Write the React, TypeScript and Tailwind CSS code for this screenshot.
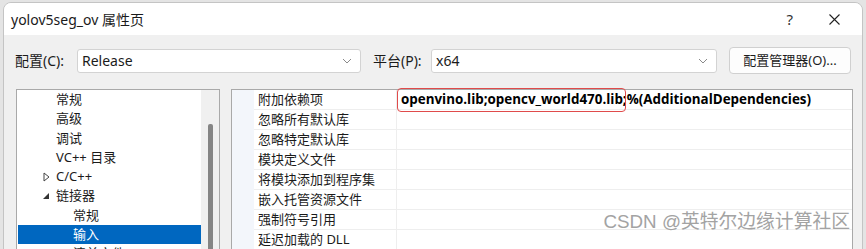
import React from 'react'

const FONT = { fontFamily: '"Noto Sans", "Noto Sans CJK SC", sans-serif' }

const TREE = [
  { label: '常规', indent: 'pl-[38px]' },
  { label: '高级', indent: 'pl-[38px]' },
  { label: '调试', indent: 'pl-[38px]' },
  { label: 'VC++ 目录', indent: 'pl-[38px]' },
  { label: 'C/C++', indent: 'pl-[38px]', arrow: 'closed' },
  { label: '链接器', indent: 'pl-[38px]', arrow: 'open' },
  { label: '常规', indent: 'pl-[55px]' },
  { label: '输入', indent: 'pl-[55px]', selected: true },
  { label: '清单文件', indent: 'pl-[55px]' },
]

const PROPS = [
  '附加依赖项',
  '忽略所有默认库',
  '忽略特定默认库',
  '模块定义文件',
  '将模块添加到程序集',
  '嵌入托管资源文件',
  '强制符号引用',
  '延迟加载的 DLL',
]

function Chevron() {
  return (
    <svg width="10" height="6" viewBox="0 0 10 6" className="mr-[8px]">
      <path d="M1 1 L5 5 L9 1" fill="none" stroke="#8a8a8a" strokeWidth="1" />
    </svg>
  )
}

function Select({ value, width }: { value: string; width: string }) {
  return (
    <div
      className={`${width} flex h-[24px] items-center justify-between rounded-[3px] border border-[#d3d3d3] bg-white pl-[4px] text-[14px] text-[#1b1b1b]`}
    >
      <span>{value}</span>
      <Chevron />
    </div>
  )
}

function Arrow({ kind }: { kind?: string }) {
  if (kind === 'closed')
    return (
      <svg width="7" height="10" viewBox="0 0 7 10" className="absolute left-[25px] top-[5px]">
        <path d="M1 1 L6 5 L1 9 Z" fill="none" stroke="#444" strokeWidth="1" />
      </svg>
    )
  if (kind === 'open')
    return (
      <svg width="7" height="7" viewBox="0 0 7 7" className="absolute left-[25px] top-[7px]">
        <path d="M6 0 L6 6 L0 6 Z" fill="#333" />
      </svg>
    )
  return null
}

export default function App() {
  return (
    <div className="h-[249px] w-[866px] overflow-hidden bg-[#e4e4e4] pl-[3px] pr-[3px] pt-[2px]" style={FONT}>
      <div className="relative flex h-[260px] flex-col overflow-hidden rounded-t-[8px] border border-[#c4c4c4] bg-[#f0f0f0]">
        {/* ── Title bar ─────────────────────────────── */}
        <div className="flex h-[32px] shrink-0 items-center justify-between bg-white pl-[7px]">
          <span className="text-[14px] text-[#1a1a1a]">yolov5seg_ov 属性页</span>
          <div className="flex items-center">
            <span className="mr-[36px] text-[15px] text-[#333]">?</span>
            <svg width="11" height="11" viewBox="0 0 11 11" className="mr-[22px]">
              <path d="M0.5 0.5 L10.5 10.5 M10.5 0.5 L0.5 10.5" stroke="#222" strokeWidth="1.1" />
            </svg>
          </div>
        </div>

        {/* ── Config row ────────────────────────────── */}
        <div className="flex items-center pl-[11px] pt-[12px] text-[14px] text-[#1b1b1b]">
          <span className="w-[62px]">配置(C):</span>
          <Select value="Release" width="w-[284px]" />
          <span className="ml-[12px] w-[58px]">平台(P):</span>
          <Select value="x64" width="w-[286px]" />
          <div className="ml-[12px] flex h-[27px] w-[122px] items-center justify-center rounded-[4px] border border-[#d0d0d0] bg-[#fdfdfd] text-[13px]">
            配置管理器(O)...
          </div>
        </div>

        {/* ── Tree + grid ───────────────────────────── */}
        <div className="flex gap-[11px] pl-[12px] pt-[15px] text-[13px] text-[#1b1b1b]">
          <div className="flex h-[200px] w-[204px] border border-[#a9a9a9] bg-white">
            <div className="flex-1 pl-[1px]">
              {TREE.map((t, i) => (
                <div
                  key={i}
                  className={`relative flex h-[19.3px] items-center ${t.indent} ${
                    t.selected ? 'bg-[#0067c0] text-white' : ''
                  }`}
                >
                  <Arrow kind={t.arrow} />
                  {t.label}
                </div>
              ))}
            </div>
            <div className="flex w-[18px] justify-center bg-[#f0f0f0] pt-[34px]">
              <div className="h-[200px] w-[5px] rounded-t-[2px] bg-[#858585]" />
            </div>
          </div>

          <div className="h-[200px] w-[622px] border border-[#a9a9a9] bg-white">
            <div className="flex">
              <div className="w-[22px] bg-[#f3f6fb]" />
              <div className="flex-1">
                {PROPS.map((p, i) => (
                  <div key={i} className="flex h-[20px] border-b border-[#eeeeee]">
                    <div className="flex w-[143px] items-center border-r border-[#eeeeee] pl-[4px]">{p}</div>
                    <div className="relative flex flex-1 items-center pl-[4px]">
                      {i === 0 && (
                        <>
                          <span
                            className="text-[13.4px] font-bold text-black"
                            style={{ fontFamily: '"Open Sans", sans-serif' }}
                          >
                            openvino.lib;opencv_world470.lib;%(AdditionalDependencies)
                          </span>
                          <div className="absolute left-0 top-[-2px] h-[24px] w-[229px] rounded-[4px] border border-[#e04b4b]" />
                        </>
                      )}
                    </div>
                  </div>
                ))}
              </div>
            </div>
          </div>
        </div>

        <div
          className="absolute bottom-[25px] right-[12px] text-[18.8px] text-[#a3a3a3]"
          style={{ fontFamily: '"Liberation Sans", "Noto Sans CJK SC", sans-serif' }}
        >
          CSDN @英特尔边缘计算社区
        </div>
      </div>
    </div>
  )
}
